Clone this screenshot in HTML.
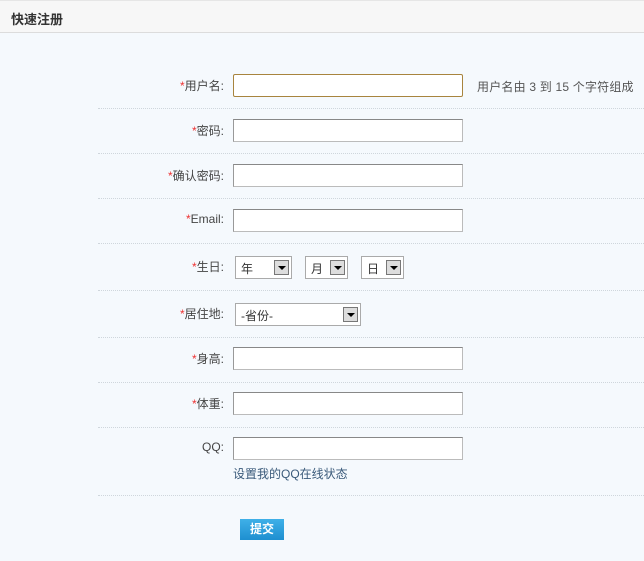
<!DOCTYPE html>
<html><head><meta charset="utf-8"><style>
body{margin:0;width:644px;height:561px;background:#f5f9fd;font-family:"Liberation Sans","Noto Sans CJK SC",sans-serif;font-size:12px;color:#333;position:relative;overflow:hidden}
.hd{position:absolute;left:0;top:0;width:644px;height:33px;background:#f7f7f7;border-top:1px solid #e6e6e6;border-bottom:1px solid #dcdcdc;box-sizing:border-box}
.hd span{position:absolute;left:11px;top:8px;font-size:13px;font-weight:bold;color:#333}
.sep{position:absolute;left:98px;width:546px;border-top:1px dotted #cfd6dc;height:0}
.lb{position:absolute;right:420px;text-align:right;color:#444;white-space:nowrap}
.lb b{color:#e33;font-weight:normal}
.in{position:absolute;left:233px;width:230px;height:23px;box-sizing:border-box;background:#fff;border:1px solid #bbb;border-top-color:#888;border-left-color:#999}
.sel{position:absolute;height:23px;box-sizing:border-box;background:#fff;border:1px solid #aaa;font-size:12px}
.sel span{position:absolute;left:5px;top:3px}
.sel i{position:absolute;right:2px;top:3px;width:15px;height:15px;box-sizing:border-box;border:1px solid #777;background:#ddd}
.sel i:after{content:"";position:absolute;left:3px;top:5px;border-left:4px solid transparent;border-right:4px solid transparent;border-top:4px solid #000}
</style></head><body>
<div class="hd"><span>快速注册</span></div>

<div class="lb" style="top:77px"><b>*</b>用户名:</div>
<div class="in" style="top:74px;border:1px solid #a8843e;border-radius:2px"></div>
<div style="position:absolute;left:477px;top:78px;color:#555;letter-spacing:0.2px">用户名由 3 到 15 个字符组成</div>
<div class="sep" style="top:108px"></div>

<div class="lb" style="top:122px"><b>*</b>密码:</div>
<div class="in" style="top:119px"></div>
<div class="sep" style="top:153px"></div>

<div class="lb" style="top:167px"><b>*</b>确认密码:</div>
<div class="in" style="top:164px"></div>
<div class="sep" style="top:198px"></div>

<div class="lb" style="top:212px"><b>*</b>Email:</div>
<div class="in" style="top:209px"></div>
<div class="sep" style="top:243px"></div>

<div class="lb" style="top:258px"><b>*</b>生日:</div>
<div class="sel" style="left:235px;top:256px;width:57px"><span>年</span><i></i></div>
<div class="sel" style="left:305px;top:256px;width:43px"><span>月</span><i></i></div>
<div class="sel" style="left:361px;top:256px;width:43px"><span>日</span><i></i></div>
<div class="sep" style="top:290px"></div>

<div class="lb" style="top:305px"><b>*</b>居住地:</div>
<div class="sel" style="left:235px;top:303px;width:126px"><span>-省份-</span><i></i></div>
<div class="sep" style="top:337px"></div>

<div class="lb" style="top:350px"><b>*</b>身高:</div>
<div class="in" style="top:347px"></div>
<div class="sep" style="top:382px"></div>

<div class="lb" style="top:395px"><b>*</b>体重:</div>
<div class="in" style="top:392px"></div>
<div class="sep" style="top:427px"></div>

<div class="lb" style="top:440px">QQ:</div>
<div class="in" style="top:437px"></div>
<div style="position:absolute;left:233px;top:465px;color:#3a5a7a">设置我的QQ在线状态</div>
<div class="sep" style="top:495px"></div>

<div style="position:absolute;left:240px;top:519px;width:44px;height:21px;background:linear-gradient(#3fb0e8,#1e8fd0);color:#fff;font-weight:bold;text-align:center;line-height:21px;font-size:12px">提交</div>
</body></html>
